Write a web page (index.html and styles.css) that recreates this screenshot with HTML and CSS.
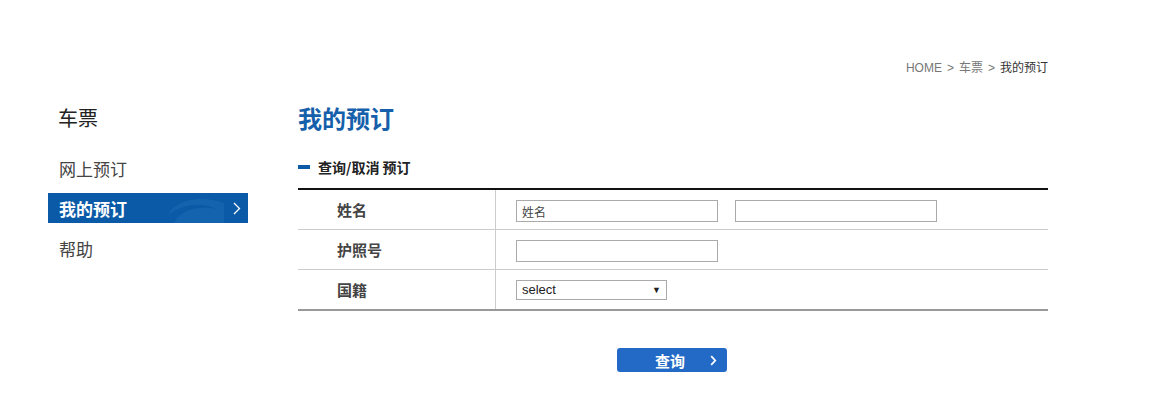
FILE: index.html
```html
<!DOCTYPE html>
<html lang="zh-CN">
<head>
    <meta charset="UTF-8">
    <title>我的预订</title>
    <link rel="stylesheet" href="styles.css">
</head>
<body>
    <div class="wrap">
        <div class="location">
            <span>HOME</span>
            <span class="sep">&gt;</span>
            <span>车票</span>
            <span class="sep">&gt;</span>
            <span class="current">我的预订</span>
        </div>

        <div class="main">
            <!-- left menu -->
            <div class="lnb">
                <h2>车票</h2>
                <ul>
                    <li><a href="#">网上预订</a></li>
                    <li class="on">
                        <a href="#">我的预订
                            <svg class="swoosh" width="60" height="30" viewBox="0 0 60 30">
                                <path d="M2 22 C10 6 36 2 58 10 L58 30 L8 30 C14 18 30 12 50 16 C36 8 14 12 2 22 Z" fill="#2a79c2" opacity="0.3"/>
                            </svg>
                            <svg class="arr" width="8" height="13" viewBox="0 0 8 13">
                                <path d="M1 1 L6.5 6.5 L1 12" fill="none" stroke="#fff" stroke-width="1.3"/>
                            </svg>
                        </a>
                    </li>
                    <li><a href="#">帮助</a></li>
                </ul>
            </div>

            <!-- content -->
            <div class="content">
                <h1>我的预订</h1>
                <h3 class="sub-title">查询/取消 预订</h3>

                <table class="form-table">
                    <tr>
                        <th>姓名</th>
                        <td>
                            <input type="text" class="ipt" value="姓名">
                            <input type="text" class="ipt ipt-last">
                        </td>
                    </tr>
                    <tr>
                        <th>护照号</th>
                        <td><input type="text" class="ipt"></td>
                    </tr>
                    <tr>
                        <th>国籍</th>
                        <td>
                            <div class="sel">select<span class="caret">&#9660;</span></div>
                        </td>
                    </tr>
                </table>

                <div class="btn-area">
                    <a href="#" class="btn">查询
                        <svg width="7" height="11" viewBox="0 0 7 11">
                            <path d="M1.2 1.2 L5.2 5.5 L1.2 9.8" fill="none" stroke="#fff" stroke-width="1.8"/>
                        </svg>
                    </a>
                </div>
            </div>
        </div>
    </div>
</body>
</html>
```

FILE: styles.css
```css
body {
    margin: 0;
    background: #fff;
    font-family: "Noto Sans CJK SC", "Liberation Sans", sans-serif;
    color: #333;
}
ul {
    list-style: none;
    margin: 0;
    padding: 0;
}
a {
    text-decoration: none;
}
.wrap {
    width: 1000px;
    margin-left: 48px;
    padding-top: 59px;
}
.location {
    display: flex;
    justify-content: flex-end;
    gap: 5px;
    font-family: "Liberation Sans", "Noto Sans CJK SC", sans-serif;
    font-size: 12px;
    line-height: 18px;
    color: #777;
}
.location .current {
    color: #333;
}
.main {
    display: flex;
    gap: 50px;
    margin-top: 23px;
}

/* left menu */
.lnb {
    width: 200px;
}
.lnb h2 {
    margin: 0 0 17px 0;
    padding-left: 10px;
    font-size: 20px;
    font-weight: normal;
    line-height: 36px;
    color: #222;
}
.lnb li {
    margin-bottom: 10px;
}
.lnb li a {
    position: relative;
    display: flex;
    align-items: center;
    height: 30px;
    padding-left: 11px;
    font-size: 17px;
    color: #444;
    overflow: hidden;
}
.lnb li.on a {
    background: #0b5aa7;
    color: #fff;
    font-weight: bold;
}
.lnb .swoosh {
    position: absolute;
    right: 22px;
    top: 0;
}
.lnb .arr {
    position: absolute;
    right: 7px;
    top: 9px;
}

/* content */
.content {
    width: 750px;
}
.content h1 {
    margin: 0;
    font-size: 24px;
    line-height: 36px;
    color: #1660ab;
}
.sub-title {
    display: flex;
    align-items: center;
    margin: 19px 0 9px 0;
    font-size: 14px;
    line-height: 24px;
    color: #222;
}
.sub-title::before {
    content: "";
    width: 12px;
    height: 4px;
    margin-right: 8px;
    background: #0b5aa7;
}
.form-table {
    width: 100%;
    border-collapse: collapse;
    border-top: 2px solid #111;
    border-bottom: 2px solid #999;
}
.form-table tr + tr th,
.form-table tr + tr td {
    border-top: 1px solid #ccc;
}
.form-table th {
    width: 158px;
    height: 39px;
    padding: 0 0 0 39px;
    border-right: 1px solid #ccc;
    text-align: left;
    font-size: 15px;
    color: #444;
}
.form-table td {
    height: 39px;
    padding: 0 0 0 20px;
}
.ipt {
    box-sizing: border-box;
    width: 202px;
    height: 22px;
    margin: 0;
    padding: 0 5px;
    border: 1px solid #aaa;
    font-family: "Noto Sans CJK SC", sans-serif;
    font-size: 12px;
    color: #444;
    vertical-align: middle;
}
.ipt-last {
    margin-left: 13px;
}
.sel {
    box-sizing: border-box;
    display: flex;
    justify-content: space-between;
    align-items: center;
    width: 151px;
    height: 20px;
    padding: 0 5px;
    border: 1px solid #aaa;
    font-family: "Liberation Sans", sans-serif;
    font-size: 13px;
    color: #222;
}
.sel .caret {
    font-size: 9px;
}
.btn-area {
    display: flex;
    justify-content: center;
    margin-top: 37px;
}
.btn {
    display: flex;
    align-items: center;
    justify-content: space-between;
    box-sizing: border-box;
    width: 110px;
    height: 24px;
    padding: 0 10px 0 38px;
    margin-left: -2px;
    border-radius: 3px;
    background: #236ac6;
    font-size: 15px;
    font-weight: bold;
    color: #fff;
}
```
